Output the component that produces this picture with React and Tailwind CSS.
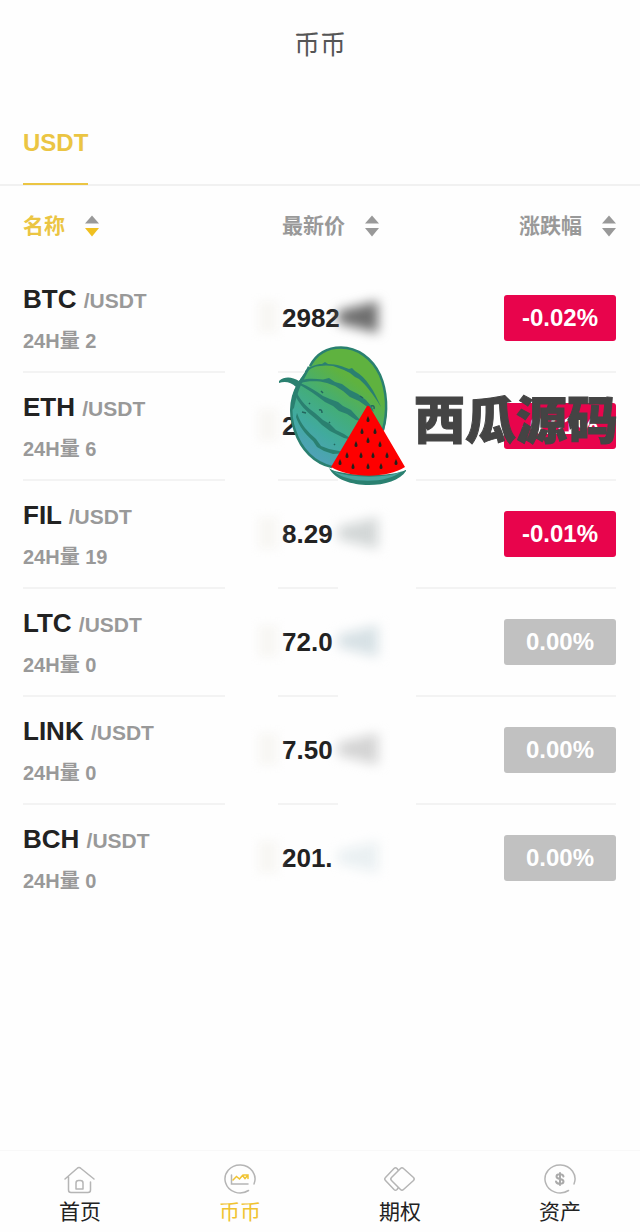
import { useState } from "react";

const markets = [
  { coin: "BTC", volume: 2, price: "2982", change: -0.02, smudge: "bg-[#6e6e6e]" },
  { coin: "ETH", volume: 6, price: "2", change: -0.01, smudge: "bg-[#dde2e2]" },
  { coin: "FIL", volume: 19, price: "8.29", change: -0.01, smudge: "bg-[#d3d7d7]" },
  { coin: "LTC", volume: 0, price: "72.0", change: 0, smudge: "bg-[#d7e1e5]" },
  { coin: "LINK", volume: 0, price: "7.50", change: 0, smudge: "bg-[#d4d4d4]" },
  { coin: "BCH", volume: 0, price: "201.", change: 0, smudge: "bg-[#eaf0f2]" },
];

const tabs = [
  { label: "首页", icon: HomeIcon },
  { label: "币币", icon: ChartIcon },
  { label: "期权", icon: OptionIcon },
  { label: "资产", icon: AssetIcon },
];

export default function App() {
  const [sortBy, setSortBy] = useState("name");
  const [page, setPage] = useState("币币");

  return (
    <div className="min-h-screen flex flex-col bg-[#fefefe] text-[#222] font-['Liberation_Sans','Noto_Sans_CJK_SC',sans-serif]">
      <header className="h-[90px] flex items-center justify-center">
        <h1 className="text-[26px] leading-8 text-[#555]">币币</h1>
      </header>

      <div className="mt-2.5 pl-[23px] border-b-2 border-[#f1f1f1] flex">
        <button
          type="button"
          className="h-[85px] -mb-px pt-0.5 border-b-2 border-[#ebc543] text-2xl font-bold text-[#ebc543]"
        >
          USDT
        </button>
      </div>

      <main className="flex-grow relative pl-[23px] pr-6">
        <table className="w-full table-fixed border-separate border-spacing-0">
          <thead>
            <tr className="h-[79px]">
              <th className="w-[43%] p-0 text-left">
                <SortButton label="名称" active={sortBy === "name"} onClick={() => setSortBy("name")} />
              </th>
              <th className="w-[23%] p-0 pl-1 text-left">
                <SortButton label="最新价" active={sortBy === "price"} onClick={() => setSortBy("price")} />
              </th>
              <th className="p-0 text-right">
                <SortButton label="涨跌幅" active={sortBy === "change"} onClick={() => setSortBy("change")} />
              </th>
            </tr>
          </thead>
          <tbody>
            {markets.map((item) => (
              <MarketRow key={item.coin} {...item} />
            ))}
          </tbody>
        </table>
        <Watermark />
      </main>

      <nav className="sticky bottom-0 h-[82px] border-t border-[#f8f8f8] bg-[#fefefe] flex">
        {tabs.map(({ label, icon: Icon }) => (
          <button
            key={label}
            type="button"
            onClick={() => setPage(label)}
            className={`flex-1 flex flex-col items-center gap-px pt-2.5 text-[21px] leading-8 ${
              page === label ? "text-[#f0c330]" : "text-[#222]"
            }`}
          >
            <Icon />
            {label}
          </button>
        ))}
      </nav>
    </div>
  );
}

function SortButton({ label, active, onClick }) {
  return (
    <button
      type="button"
      onClick={onClick}
      className={`inline-flex items-center gap-5 text-[21px] leading-8 font-bold ${
        active ? "text-[#ebc543]" : "text-[#999]"
      }`}
    >
      {label}
      <svg width="14" height="22" viewBox="0 0 14 22" aria-hidden="true">
        <path d="M7 0.5 14 8.5H0Z" fill="#999" />
        <path d="M0 13h14L7 21.5Z" fill={active ? "#f0c020" : "#999"} />
      </svg>
    </button>
  );
}

function MarketRow({ coin, volume, price, change, smudge }) {
  return (
    <tr className="group">
      <td className="p-0 pt-[18px] pb-3.5 border-b-2 border-[#f3f3f3] group-last:border-transparent">
        <div className="text-[26px] leading-8 font-bold whitespace-nowrap">
          {coin} <span className="text-[21px] text-[#999]">/USDT</span>
        </div>
        <div className="mt-2 text-xl leading-8 font-bold text-[#999]">24H量 {volume}</div>
      </td>
      <td className="relative p-0 pl-1 border-b-2 border-[#f3f3f3] group-last:border-transparent text-[26px] leading-8 font-bold">
        {price}
        {/* the rest of the price is smeared out */}
        <span className="absolute right-full top-9 w-5 h-8 bg-[#f8f7f4] blur-[5px]" />
        <span className="absolute left-[60px] top-8 w-10 h-10 blur-[6px]">
          <span
            className={`block w-full h-full [clip-path:polygon(0_35%,100%_10%,100%_90%,0_65%)] ${smudge}`}
          />
        </span>
        <span className="absolute right-full -bottom-1 w-[53px] h-1.5 bg-[#fefefe]" />
        <span className="absolute left-[60px] -bottom-1 w-[78px] h-1.5 bg-[#fefefe]" />
      </td>
      <td className="p-0 border-b-2 border-[#f3f3f3] group-last:border-transparent text-right">
        <span
          className={`inline-flex w-28 h-[46px] items-center justify-center rounded-[3px] align-middle text-2xl font-bold text-white ${
            change < 0 ? "bg-[#e8044c]" : "bg-[#c1c1c1]"
          }`}
        >
          {change.toFixed(2)}%
        </span>
      </td>
    </tr>
  );
}

function Watermark() {
  return (
    <div className="absolute top-[158px] right-[22px] flex items-center gap-2 pointer-events-none">
      <Watermelon />
      <span className="pt-3 text-[51px] leading-[60px] font-black text-[#444] whitespace-nowrap [-webkit-text-stroke:1px_#444]">
        西瓜源码
      </span>
    </div>
  );
}

function Watermelon() {
  return (
    <svg width="130" height="144" viewBox="275 344 130 144" aria-hidden="true">
      <defs>
        <linearGradient id="rind" x1="0.75" y1="0.1" x2="0.25" y2="1">
          <stop offset="0.2" stopColor="#5fb23f" />
          <stop offset="0.48" stopColor="#43ad78" />
          <stop offset="0.72" stopColor="#41aa9e" />
          <stop offset="1" stopColor="#559fc0" />
        </linearGradient>
      </defs>
      <path
        d="M308 367C315 354 326 347 340 347C356 347 371 358 379 375C386 391 388 412 383 430C379 449 365 466 345 468C330 469 314 462 303 448C292 434 287 412 292 395C295 386 299 379 303 374Z"
        fill="url(#rind)"
      />
      <path
        d="M309 366C316 353 327 347.5 340 347.5C356 347.5 371 358 379 375C386 391 387 412 382 430M301 379C290 393 287 412 294 431C300 449 313 463 331 467"
        fill="none"
        stroke="#2a8070"
        strokeWidth="2.5"
      />
      <path
        d="M278 381C284 376 291 377 298 381L304 372L307 366L309 368L302 381C298 388 295 398 293 408L291 410C290 400 292 393 295 387C290 382 284 381 278 383Z"
        fill="#2a8070"
      />
      <g fill="#2a8070">
        <path d="M304 371C310 366 315 364 321 364L324 362L327 364C336 364 343 367 348 369L351 368L354 371C365 377 374 392 380 407C372 394 365 385 358 379L354 377L349 373L343 370L332 366L325 365.500L319 366C313 366 309 369 304 373Z" />
        <path d="M300 380C309 378 315 379 322 379.500L328 378L334 382L341 384L349 390L357 394L365 400L371 407L373 412L365 406L358 401L349 397L342 391L334 386L326 383L319 381.500C311 381 306 381 299 383Z" />
        <path d="M299 383C307 386 315 391 322 396L329 399L337 402L342 406L350 410L360 421L355 420L346 414L338 411L332 406L324 402L316 396C309 391 304 388 299 385Z" />
        <path d="M295 391C300 402 307 408 314 413L322 420L329 424L335 430L343 434L352 440L343 438L335 434L329 431L321 425L316 420L310 415C303 409 297 402 294 395Z" />
        <path d="M296 413C300 425 307 432 315 439L320 446L328 449L338 451L347 453L332 454L323 451L316 447L312 441C304 434 298 426 295 417Z" />
      </g>
      <path
        d="M320 391l2 2M359 396l3 2M308 403l1 1M318 410q3-1 3 3M301 412l4 1M328 422l1 1M333 444l1 1M370 406q4-1 3 3"
        fill="none"
        stroke="#24665e"
        strokeWidth="1.5"
      />
      <path d="M328 468C336 476 395 478 406 469C397 490 339 491 328 468Z" fill="#2a8070" />
      <path d="M332 471C345 478 389 479 401 471C387 484 347 484 332 471Z" fill="#4aa5a0" />
      <path d="M366 406C367 405 369 406 370 409L404 467C386 479 348 478 330 467Z" fill="#fe0000" />
      <g fill="#22221c">
        {[
          [367, 419], [361, 431], [374, 431], [367, 440], [355, 444], [379, 444],
          [346, 455], [360, 455], [372, 455], [386, 455],
          [339, 462], [352, 466], [367, 466], [380, 466], [395, 462],
        ].map(([x, y]) => (
          <path key={`${x}-${y}`} d={`M${x} ${y - 3}q3 6 0 6q-3 0 0-6Z`} />
        ))}
      </g>
    </svg>
  );
}

function HomeIcon() {
  return (
    <svg width="34" height="34" viewBox="0 0 34 34" fill="none" stroke="#b5b5b5" strokeWidth="1.5" strokeLinecap="round" strokeLinejoin="round" aria-hidden="true">
      <path d="M2 18 14 7.5q2-2 4 0L31 18M5.500 16v13q0 2.500 2.500 2.500h17q2.500 0 2.500-2.500v-8" />
      <path d="M13 28v-6q0-2.500 2.500-2.500h2q2.500 0 2.500 2.500v6Z" />
    </svg>
  );
}

function ChartIcon() {
  return (
    <svg width="34" height="34" viewBox="0 0 34 34" fill="none" stroke="#b5b5b5" strokeWidth="1.5" strokeLinecap="round" aria-hidden="true">
      <path d="M25.500 29.500A15 14 0 1 1 31 23" />
      <path d="M8.500 14v9H25" />
      <path d="m10 19 3.500-3.500 3 2.500 3-3.500 2.500 3 3-3.500M20.500 14H25v3.500" stroke="#f0c330" />
    </svg>
  );
}

function OptionIcon() {
  return (
    <svg width="34" height="34" viewBox="0 0 34 34" fill="none" stroke="#b5b5b5" strokeWidth="1.5" strokeLinejoin="round" aria-hidden="true">
      <path d="m17.500 7.500-9 9q-1.500 1.500 0 3l9 9q1.500 1.500 3 0l10-9q1.500-1.500 0-3l-10-9q-1.500-1.500-3 0Z" />
      <path d="m15.500 9.500-1.500-2q-1.500-1.500-3 0l-8.500 9q-1.500 1.500 0 3l8.500 9q1.500 1.500 3 0l1.500-2" />
    </svg>
  );
}

function AssetIcon() {
  return (
    <svg width="34" height="34" viewBox="0 0 34 34" fill="none" stroke="#b5b5b5" strokeWidth="1.5" strokeLinecap="round" aria-hidden="true">
      <path d="M25.500 29.500A15 14 0 1 1 31 23" />
      <path d="M20.500 15.500c-.5-3-7-3-7 0 0 3.500 7 1.500 7 5 0 3-7 3-7.500 0M17 12v12" strokeWidth="2" stroke="#aaa" />
    </svg>
  );
}
